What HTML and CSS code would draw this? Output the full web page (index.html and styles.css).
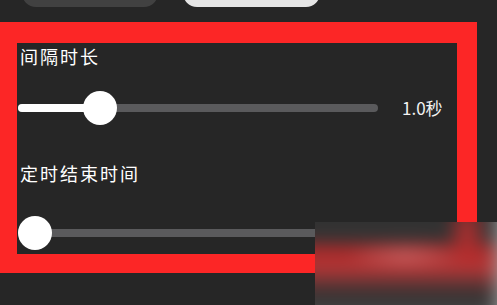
FILE: index.html
```html
<!DOCTYPE html>
<html lang="zh-CN">
<head>
<meta charset="utf-8">
<link rel="stylesheet" href="styles.css">
</head>
<body>
<div class="tabs">
  <div class="pill pill-dark"></div>
  <div class="pill pill-light"></div>
</div>
<div class="frame">
  <div class="label label-first">间隔时长</div>
  <div class="slider slider-first">
    <div class="track">
      <div class="fill" style="width:82px"></div>
      <div class="thumb" style="left:65px"></div>
    </div>
    <div class="value">1.0秒</div>
  </div>
  <div class="label label-second">定时结束时间</div>
  <div class="slider slider-second">
    <div class="track">
      <div class="thumb" style="left:0px"></div>
    </div>
  </div>
</div>
<div class="watermark"><div class="wm-inner"></div></div>
</body>
</html>
```
FILE: styles.css
```css
html, body {
  margin: 0;
  padding: 0;
  background: #262626;
  width: 497px;
  height: 305px;
  overflow: hidden;
  position: relative;
  font-family: "Noto Sans CJK SC", "Noto Sans", sans-serif;
  color: #ffffff;
}
.tabs {
  display: flex;
  height: 22px;
  padding-left: 22px;
  gap: 25px;
  overflow: hidden;
}
.pill {
  height: 30px;
  margin-top: -23px;
  border-radius: 14px;
}
.pill-dark {
  width: 136px;
  background: #414141;
}
.pill-light {
  width: 137px;
  background: #e5e5e5;
}
.frame {
  width: 440px;
  border-style: solid;
  border-color: #fc2626;
  border-width: 21px 20px 19px 17px;
  padding: 1px 0 4px 0;
}
.label {
  font-size: 18px;
  line-height: 24px;
  letter-spacing: 2px;
  padding-left: 3px;
}
.label-second {
  margin-top: 36px;
}
.slider {
  display: flex;
  align-items: center;
  height: 34px;
  padding-left: 1px;
}
.slider-first {
  margin-top: 23px;
}
.slider-second {
  margin-top: 31px;
}
.track {
  position: relative;
  width: 360px;
  height: 8px;
  border-radius: 4px;
  background: #5a5a5c;
}
.fill {
  position: absolute;
  left: 0;
  top: 0;
  height: 8px;
  border-radius: 4px;
  background: #ffffff;
}
.thumb {
  position: absolute;
  top: -13px;
  width: 34px;
  height: 34px;
  border-radius: 50%;
  background: #ffffff;
}
.value {
  margin-left: 24px;
  font-size: 17px;
  line-height: 20px;
  color: #f2f2f2;
}
.watermark {
  position: absolute;
  left: 315px;
  top: 222px;
  width: 182px;
  height: 83px;
  overflow: hidden;
  background: #333333;
}
.wm-inner {
  position: absolute;
  left: -20px;
  top: -20px;
  right: -20px;
  bottom: -20px;
  filter: blur(7px);
  background:
    linear-gradient(90deg, rgba(0,0,0,0) 0%, rgba(0,0,0,0) 86%, rgba(170,170,170,0.95) 96%),
    radial-gradient(ellipse 22px 40px at 172px 30px, rgba(200,45,45,0.9), rgba(200,45,45,0) 100%),
    radial-gradient(ellipse 60px 16px at 110px 54px, rgba(210,120,120,0.6), rgba(210,120,120,0) 100%),
    linear-gradient(180deg, #2e2e2e 0%, #343434 28%, #a82a2a 40%, #b23636 54%, #5a3434 68%, #333333 78%, #5a5a5a 100%);
}
```
